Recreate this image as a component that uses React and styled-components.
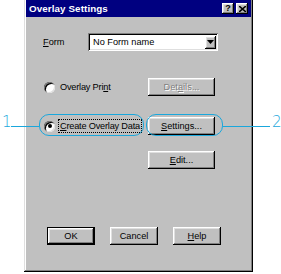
import React from "react";
import styled, { createGlobalStyle, css } from "styled-components";

const GlobalStyle = createGlobalStyle`
  html, body { margin: 0; padding: 0; background: #fff; }
  body { font-family: "Liberation Sans", Arial, sans-serif; }
`;

const face = "#c0c0c0";
const callout = "#1aa7dc";

const raised = css`
  box-shadow: inset -1px -1px #000, inset 1px 1px #fff,
    inset -2px -2px #808080, inset 2px 2px #dfdfdf;
`;

const Page = styled.div`
  position: relative;
  width: 281px;
  height: 274px;
  overflow: hidden;
  background: #fff;
`;

const Dialog = styled.div`
  margin-left: 24px;
  width: 229px;
  height: 272px;
  box-sizing: border-box;
  padding: 0 2px 2px 2px;
  background: ${face};
  box-shadow: inset -1px -1px #000, inset 1px 0 #dfdfdf,
    inset -2px -2px #808080, inset 2px 0 #fff;
  display: flex;
  flex-direction: column;
  font-size: 8.8px;
  color: #000;
`;

const TitleBar = styled.div`
  height: 17px;
  background: #000080;
  display: flex;
  align-items: center;
  padding: 0 3px;
  gap: 2px;
`;

const Title = styled.div`
  flex: 1;
  color: #fff;
  font-weight: bold;
  font-size: 9.8px;
  letter-spacing: 0.1px;
`;

const CapButton = styled.div`
  width: 12px;
  height: 11px;
  background: ${face};
  ${raised};
  display: flex;
  align-items: center;
  justify-content: center;
  font-weight: bold;
  font-size: 9px;
  line-height: 1;
  color: #000;
`;

const Body = styled.div`
  display: flex;
  flex-direction: column;
  padding-left: 17px;
`;

const Row = styled.div`
  display: flex;
  align-items: center;
  margin-top: ${(p) => p.$top}px;
`;

const Label = styled.div`
  width: 45px;
  font-size: 9.2px;
`;

const Combo = styled.div`
  width: 130px;
  height: 18px;
  box-sizing: border-box;
  background: #fff;
  box-shadow: inset 1px 1px #808080, inset -1px -1px #fff,
    inset 2px 2px #000, inset -2px -2px #dfdfdf;
  display: flex;
  align-items: center;
  padding: 2px 2px 2px 5px;
`;

const ComboText = styled.div`
  flex: 1;
  font-size: 9.2px;
`;

const DropButton = styled.div`
  width: 11px;
  height: 13px;
  background: ${face};
  ${raised};
  display: flex;
  align-items: center;
  justify-content: center;
`;

const Choice = styled.div`
  width: 105px;
  display: flex;
  align-items: center;
  padding-left: 1px;
  box-sizing: border-box;
`;

const Radio = styled.span`
  width: 11px;
  height: 11px;
  box-sizing: border-box;
  border-radius: 50%;
  background: #fff;
  box-shadow: inset 1px 1px #808080, inset -1px -1px #dfdfdf,
    inset 2px 2px #000;
  display: flex;
  align-items: center;
  justify-content: center;
  margin-right: 3px;

  &::after {
    content: "";
    width: 4px;
    height: 4px;
    border-radius: 50%;
    background: ${(p) => (p.$checked ? "#000" : "transparent")};
  }
`;

const ChoiceText = styled.span`
  font-size: 9.2px;
  letter-spacing: -0.2px;
  padding: 1px 1px;
  border: 1px dotted ${(p) => (p.$focus ? "#000" : "transparent")};
`;

const Button = styled.div`
  width: ${(p) => p.$w || 67}px;
  height: 18px;
  box-sizing: border-box;
  background: ${face};
  ${raised};
  ${(p) =>
    p.$default &&
    css`
      box-shadow: inset 0 0 0 1px #000, inset -2px -2px #000,
        inset 2px 2px #fff, inset -3px -3px #808080, inset 3px 3px #dfdfdf;
    `}
  display: flex;
  align-items: center;
  justify-content: center;
  font-size: 9.2px;
  color: ${(p) => (p.$disabled ? "#808080" : "#000")};
  text-shadow: ${(p) => (p.$disabled ? "1px 1px #fff" : "none")};
`;

const Buttons = styled.div`
  display: flex;
  gap: 15px;
  padding-left: 4px;
  margin-top: 58px;
`;

const U = styled.span`
  text-decoration: underline;
`;

const Ring = styled.div`
  position: absolute;
  left: ${(p) => p.$x}px;
  top: 114px;
  width: ${(p) => p.$w}px;
  height: 22px;
  box-sizing: border-box;
  border: 1px solid ${callout};
  border-radius: 10px;
`;

const Leader = styled.div`
  position: absolute;
  left: ${(p) => p.$x}px;
  top: 126px;
  width: ${(p) => p.$w}px;
  height: 1px;
  background: ${callout};
`;

const Num = styled.div`
  position: absolute;
  left: ${(p) => p.$x}px;
  top: 115px;
  color: ${callout};
  font-family: "DejaVu Sans", sans-serif;
  font-weight: 200;
  font-size: 15px;
  line-height: 1;
`;

export default function App() {
  return (
    <Page>
      <GlobalStyle />
      <Dialog>
        <TitleBar>
          <Title>Overlay Settings</Title>
          <CapButton>?</CapButton>
          <CapButton>
            <svg width="7" height="6" viewBox="0 0 7 6">
              <path d="M0 0 L7 6 M7 0 L0 6" stroke="#000" strokeWidth="1.6" />
            </svg>
          </CapButton>
        </TitleBar>
        <Body>
          <Row $top={16}>
            <Label>
              <U>F</U>orm
            </Label>
            <Combo>
              <ComboText>No Form name</ComboText>
              <DropButton>
                <svg width="7" height="4" viewBox="0 0 7 4">
                  <path d="M0 0 H7 L3.5 4 Z" fill="#000" />
                </svg>
              </DropButton>
            </Combo>
          </Row>
          <Row $top={27}>
            <Choice>
              <Radio />
              <ChoiceText>
                Overlay Pri<U>n</U>t
              </ChoiceText>
            </Choice>
            <Button $disabled>
              Det<U>a</U>ils...
            </Button>
          </Row>
          <Row $top={21}>
            <Choice>
              <Radio $checked />
              <ChoiceText $focus>
                <U>C</U>reate Overlay Data
              </ChoiceText>
            </Choice>
            <Button>
              <U>S</U>ettings...
            </Button>
          </Row>
          <Row $top={16}>
            <Choice />
            <Button>
              <U>E</U>dit...
            </Button>
          </Row>
          <Buttons>
            <Button $w={48} $default>
              OK
            </Button>
            <Button $w={48}>Cancel</Button>
            <Button $w={48}>
              <U>H</U>elp
            </Button>
          </Buttons>
        </Body>
      </Dialog>
      <Ring $x={39} $w={105} />
      <Ring $x={146} $w={77} />
      <Leader $x={11} $w={28} />
      <Leader $x={223} $w={47} />
      <Num $x={2}>1</Num>
      <Num $x={272}>2</Num>
    </Page>
  );
}
